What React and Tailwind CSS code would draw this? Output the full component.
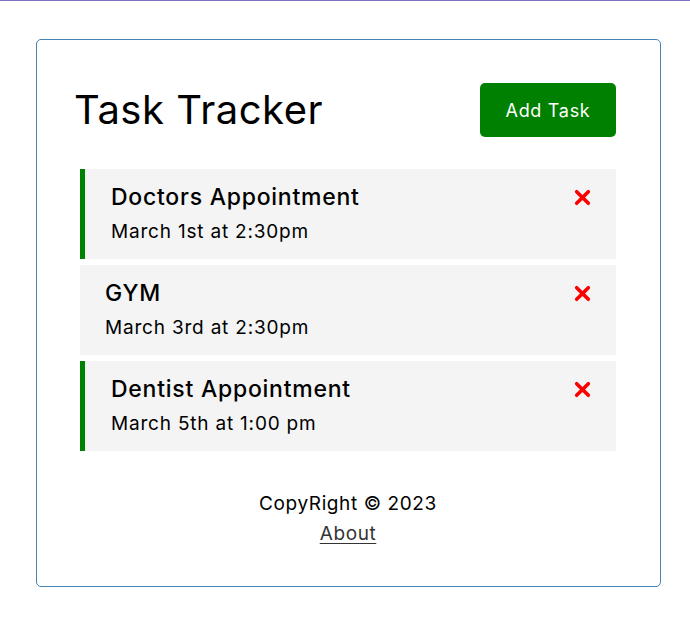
import React from "react";

const tasks = [
  { id: 1, text: "Doctors Appointment", day: "March 1st at 2:30pm", reminder: true },
  { id: 2, text: "GYM", day: "March 3rd at 2:30pm", reminder: false },
  { id: 3, text: "Dentist Appointment", day: "March 5th at 1:00 pm", reminder: true },
];

function Cross() {
  return (
    <svg width="17" height="17" viewBox="0 0 16 16" className="shrink-0">
      <path d="M2.5 2.5 L13.5 13.5 M13.5 2.5 L2.5 13.5" stroke="#ff0000" strokeWidth="3.4" strokeLinecap="round" />
    </svg>
  );
}

function Task({ task }) {
  return (
    <div
      className={`h-[90px] bg-[#f4f4f4] pr-[25px] pt-[13px] ${
        task.reminder ? "border-l-[5px] border-[#008000] pl-[26px]" : "pl-[25px]"
      }`}
    >
      <div className="flex items-center justify-between">
        <h3 className="text-[23px] font-medium leading-[30px] tracking-[0.75px] text-black">{task.text}</h3>
        <Cross />
      </div>
      <p className="mt-[5px] text-[19px] leading-[30px] tracking-[0.8px] text-black">{task.day}</p>
    </div>
  );
}

export default function App() {
  return (
    <div className="min-h-[617px] bg-white font-['Inter','Open_Sans',sans-serif]">
      <div className="h-px bg-[#8070c0]" />
      <div className="ml-[36px] mt-[38px] w-[625px] rounded-[5px] border border-solid border-[color:#4682b4] pb-[37px] pl-[38px] pr-[39px] pt-[38px]">
        <div className="mb-[27px] flex h-[64px] items-center justify-between">
          <h1 className="ml-[-1px] text-[40px] font-normal leading-none tracking-[0.5px] text-black">Task Tracker</h1>
          <button className="m-[5px] h-[54px] w-[136px] rounded-[5px] bg-[#008000] text-[18px] tracking-[0.7px] text-white">
            Add Task
          </button>
        </div>
        <div className="mx-[5px] flex flex-col gap-[6px]">
          {tasks.map((t) => (
            <Task key={t.id} task={t} />
          ))}
        </div>
        <footer className="mt-[38px] text-center text-[19px] leading-[30px] tracking-[0.6px] text-black">
          <p>CopyRight © 2023</p>
          <a href="#" className="text-[#333] underline underline-offset-[3px]">
            About
          </a>
        </footer>
      </div>
    </div>
  );
}
